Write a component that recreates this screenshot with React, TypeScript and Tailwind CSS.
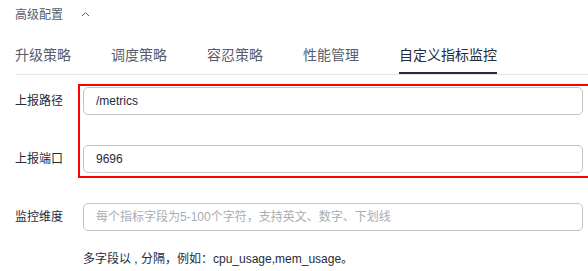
const tabs = ["升级策略", "调度策略", "容忍策略", "性能管理", "自定义指标监控"];

function FieldRow({
  label,
  value,
  placeholder,
}: {
  label: string;
  value?: string;
  placeholder?: string;
}) {
  return (
    <div className="flex items-center h-[28px]">
      <label className="w-[68px] shrink-0 text-[12px] text-[#252b3a]">{label}</label>
      <input
        type="text"
        readOnly
        defaultValue={value}
        placeholder={placeholder}
        className="w-[500px] h-[28px] px-[12px] border border-[#c4c4c4] rounded-[5px] text-[12px] text-[#252b3a] placeholder:text-[#a9acb3] outline-none bg-white"
      />
    </div>
  );
}

export default function App() {
  return (
    <div
      className="w-[588px] h-[271px] bg-white overflow-hidden"
      style={{ fontFamily: '"Liberation Sans", "Noto Sans CJK SC", sans-serif' }}
    >
      <div className="h-[30px] pl-[15px] flex items-center gap-[18px] text-[12px] text-[#575d6c]">
        <span>高级配置</span>
        <svg width="9" height="6" viewBox="0 0 9 6" className="mt-[-2px]">
          <polyline points="1,5 4.5,1.5 8,5" fill="none" stroke="#575d6c" strokeWidth="1" />
        </svg>
      </div>

      <div className="ml-[15px] flex gap-[40px] border-b border-[#e8e8e8]">
        {tabs.map((t, i) => {
          const active = i === tabs.length - 1;
          return (
            <div
              key={t}
              className={`relative h-[44px] pt-[6px] flex items-center text-[14px] ${
                active ? "text-[#252b3a]" : "text-[#575d6c]"
              }`}
            >
              {t}
              {active && <div className="absolute left-0 right-0 bottom-0 h-[2px] bg-[#252b3a]" />}
            </div>
          );
        })}
      </div>

      <div className="pl-[15px] pt-[12px]">
        <div className="relative flex flex-col gap-[30px]">
          <FieldRow label="上报路径" value="/metrics" />
          <FieldRow label="上报端口" value="9696" />
          <div className="pointer-events-none absolute top-[-3px] bottom-[-5px] left-[63px] right-[-3px] border-2 border-[#ff0000]" />
        </div>
        <div className="mt-[30px]">
          <FieldRow label="监控维度" placeholder="每个指标字段为5-100个字符，支持英文、数字、下划线" />
        </div>
        <div className="pl-[68px] mt-[19px] text-[12px] text-[#252b3a]">
          多字段以 , 分隔，例如：cpu_usage,mem_usage。
        </div>
      </div>
    </div>
  );
}
